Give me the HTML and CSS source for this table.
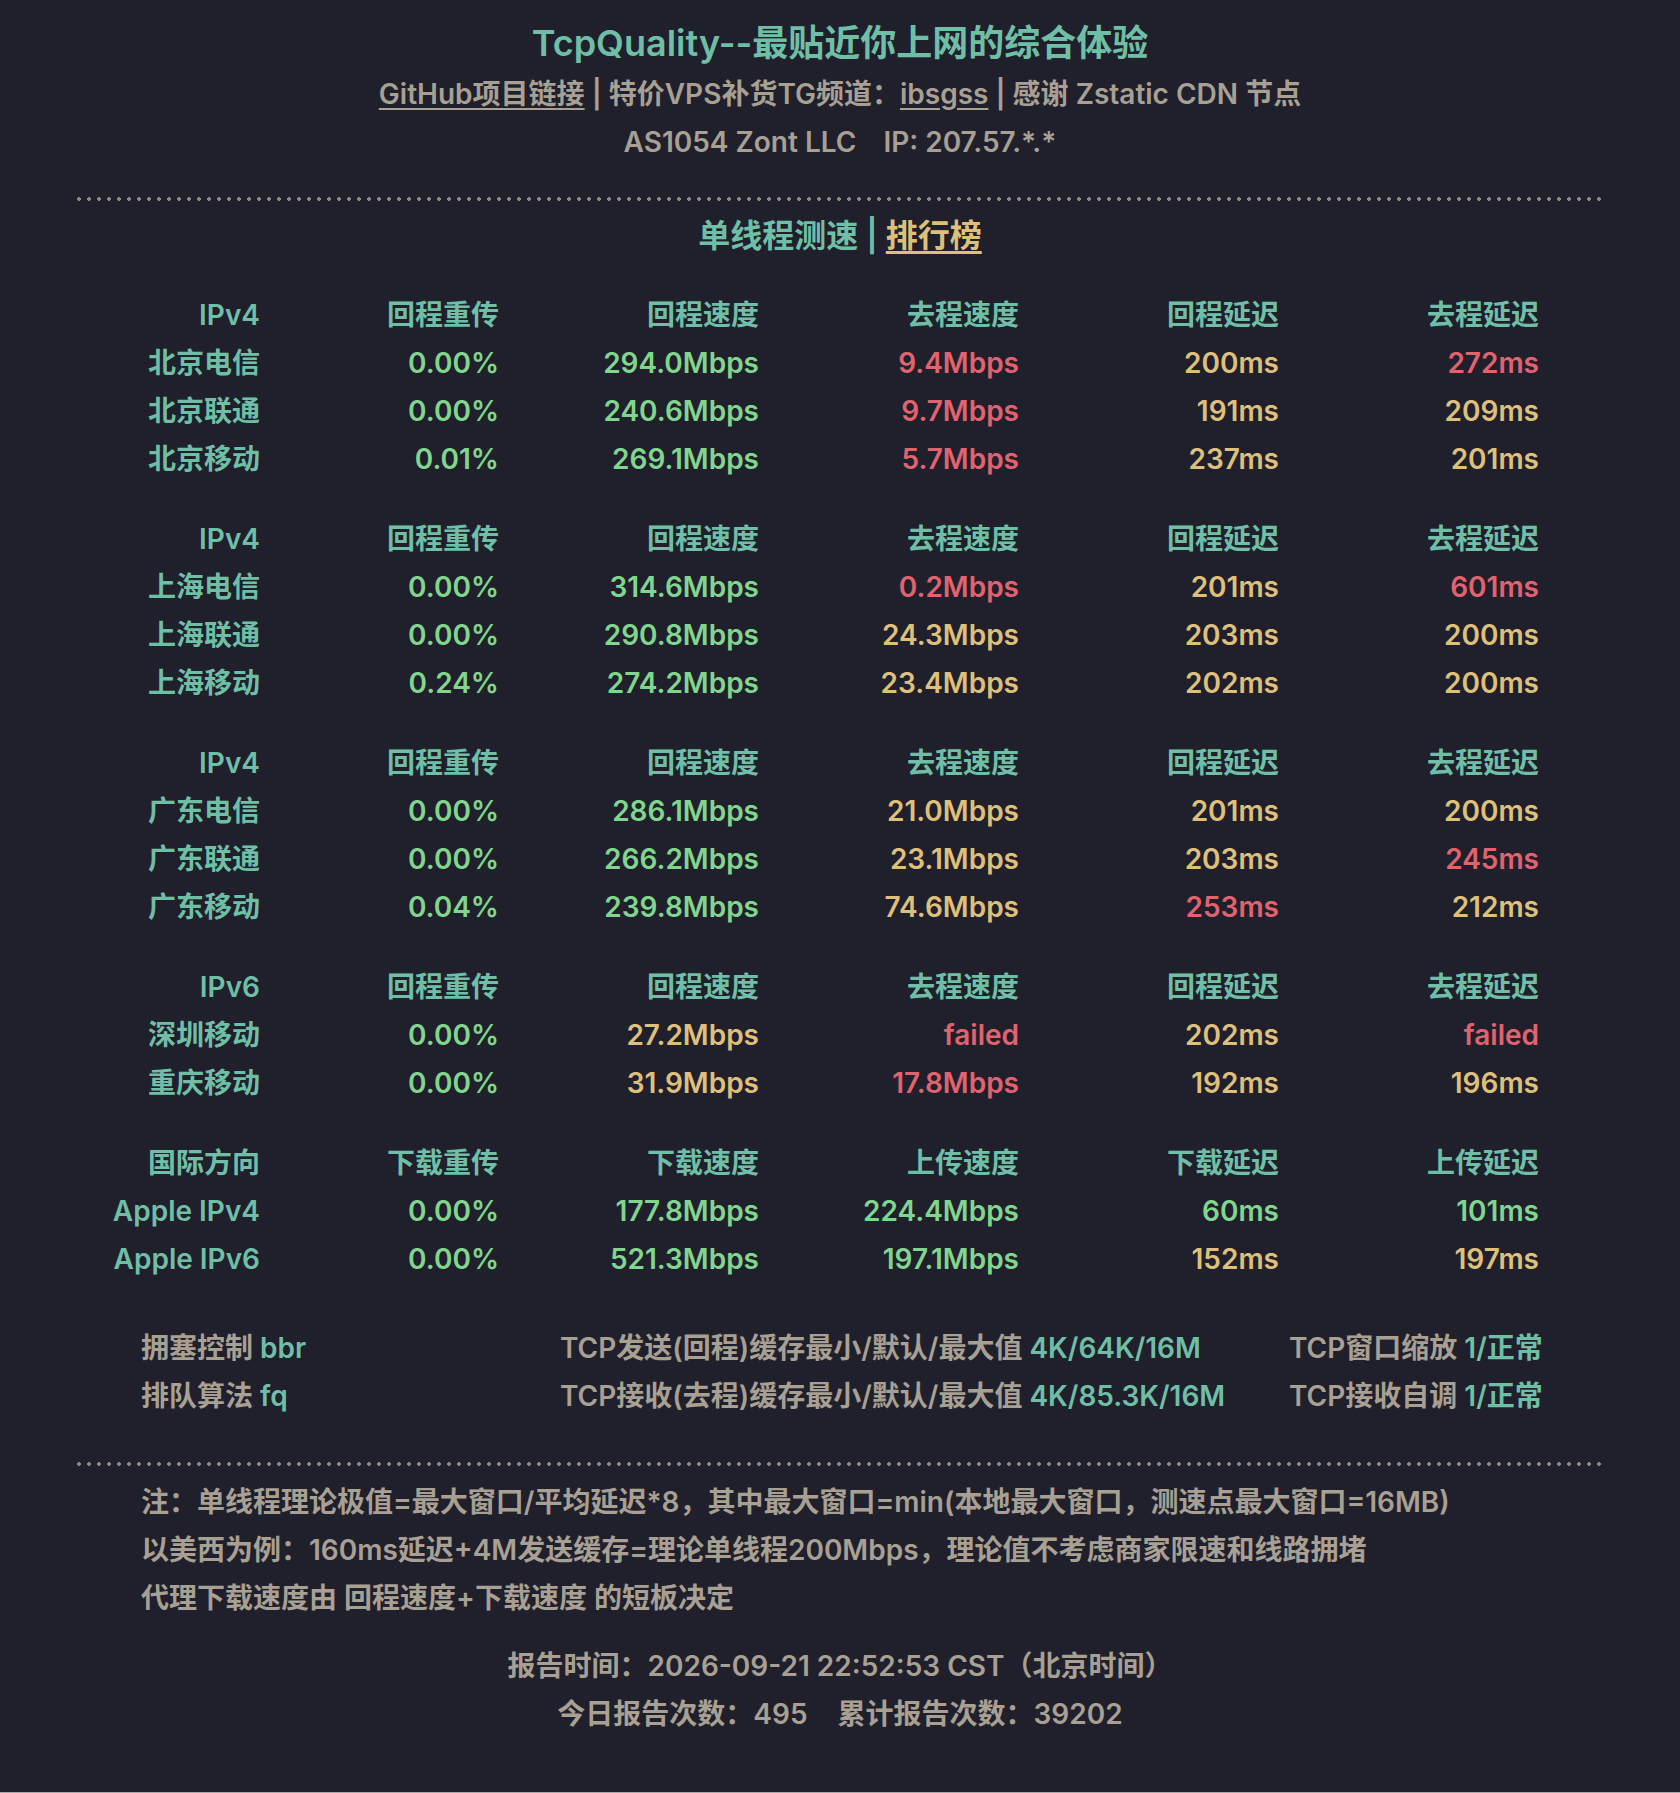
FILE: index.html
```html
<!DOCTYPE html>
<html lang="zh-CN">
<head>
<meta charset="utf-8">
<title>TcpQuality</title>
<link rel="stylesheet" href="styles.css">
</head>
<body>
<div class="page">
  <header class="head">
    <h1 class="title">TcpQuality--最贴近你上网的综合体验</h1>
    <p class="line"><a class="link" href="#">GitHub项目链接</a> | 特价VPS补货TG频道：<a class="link" href="#">ibsgss</a> | 感谢 Zstatic CDN 节点</p>
    <p class="line">AS1054 Zont LLC<span class="sp"></span>IP: 207.57.*.*</p>
  </header>

  <div class="dots"></div>

  <h2 class="sub">单线程测速 <span class="bar">|</span> <a class="rank" href="#">排行榜</a></h2>

  <div class="group">
    <div class="th">IPv4</div><div class="th">回程重传</div><div class="th">回程速度</div><div class="th">去程速度</div><div class="th">回程延迟</div><div class="th">去程延迟</div>
    <div class="th">北京电信</div><div class="g">0.00%</div><div class="g">294.0Mbps</div><div class="r">9.4Mbps</div><div class="y">200ms</div><div class="r">272ms</div>
    <div class="th">北京联通</div><div class="g">0.00%</div><div class="g">240.6Mbps</div><div class="r">9.7Mbps</div><div class="y">191ms</div><div class="y">209ms</div>
    <div class="th">北京移动</div><div class="g">0.01%</div><div class="g">269.1Mbps</div><div class="r">5.7Mbps</div><div class="y">237ms</div><div class="y">201ms</div>
  </div>

  <div class="group">
    <div class="th">IPv4</div><div class="th">回程重传</div><div class="th">回程速度</div><div class="th">去程速度</div><div class="th">回程延迟</div><div class="th">去程延迟</div>
    <div class="th">上海电信</div><div class="g">0.00%</div><div class="g">314.6Mbps</div><div class="r">0.2Mbps</div><div class="y">201ms</div><div class="r">601ms</div>
    <div class="th">上海联通</div><div class="g">0.00%</div><div class="g">290.8Mbps</div><div class="y">24.3Mbps</div><div class="y">203ms</div><div class="y">200ms</div>
    <div class="th">上海移动</div><div class="g">0.24%</div><div class="g">274.2Mbps</div><div class="y">23.4Mbps</div><div class="y">202ms</div><div class="y">200ms</div>
  </div>

  <div class="group">
    <div class="th">IPv4</div><div class="th">回程重传</div><div class="th">回程速度</div><div class="th">去程速度</div><div class="th">回程延迟</div><div class="th">去程延迟</div>
    <div class="th">广东电信</div><div class="g">0.00%</div><div class="g">286.1Mbps</div><div class="y">21.0Mbps</div><div class="y">201ms</div><div class="y">200ms</div>
    <div class="th">广东联通</div><div class="g">0.00%</div><div class="g">266.2Mbps</div><div class="y">23.1Mbps</div><div class="y">203ms</div><div class="r">245ms</div>
    <div class="th">广东移动</div><div class="g">0.04%</div><div class="g">239.8Mbps</div><div class="y">74.6Mbps</div><div class="r">253ms</div><div class="y">212ms</div>
  </div>

  <div class="group">
    <div class="th">IPv6</div><div class="th">回程重传</div><div class="th">回程速度</div><div class="th">去程速度</div><div class="th">回程延迟</div><div class="th">去程延迟</div>
    <div class="th">深圳移动</div><div class="g">0.00%</div><div class="y">27.2Mbps</div><div class="r">failed</div><div class="y">202ms</div><div class="r">failed</div>
    <div class="th">重庆移动</div><div class="g">0.00%</div><div class="y">31.9Mbps</div><div class="r">17.8Mbps</div><div class="y">192ms</div><div class="y">196ms</div>
  </div>

  <div class="group">
    <div class="th">国际方向</div><div class="th">下载重传</div><div class="th">下载速度</div><div class="th">上传速度</div><div class="th">下载延迟</div><div class="th">上传延迟</div>
    <div class="th">Apple IPv4</div><div class="g">0.00%</div><div class="g">177.8Mbps</div><div class="g">224.4Mbps</div><div class="g">60ms</div><div class="g">101ms</div>
    <div class="th">Apple IPv6</div><div class="g">0.00%</div><div class="g">521.3Mbps</div><div class="g">197.1Mbps</div><div class="y">152ms</div><div class="y">197ms</div>
  </div>

  <div class="sys">
    <div>拥塞控制 <span class="v">bbr</span></div>
    <div>TCP发送(回程)缓存最小/默认/最大值 <span class="v">4K/64K/16M</span></div>
    <div>TCP窗口缩放 <span class="v">1/正常</span></div>
    <div>排队算法 <span class="v">fq</span></div>
    <div>TCP接收(去程)缓存最小/默认/最大值 <span class="v">4K/85.3K/16M</span></div>
    <div>TCP接收自调 <span class="v">1/正常</span></div>
  </div>

  <div class="dots dots-b"></div>

  <div class="notes">
    <p>注：单线程理论极值=最大窗口/平均延迟*8，其中最大窗口=min(本地最大窗口，测速点最大窗口=16MB)</p>
    <p>以美西为例：160ms延迟+4M发送缓存=理论单线程200Mbps，理论值不考虑商家限速和线路拥堵</p>
    <p>代理下载速度由 回程速度+下载速度 的短板决定</p>
  </div>

  <div class="report">
    <p>报告时间：2026-09-21 22:52:53 CST（北京时间）</p>
    <p>今日报告次数：495<span class="sp2"></span>累计报告次数：39202</p>
  </div>
</div>
</body>
</html>
```

FILE: styles.css
```css
html {
  background: #a9a9a9;
}
body {
  margin: 0;
  font-family: Inter, "Noto Sans CJK SC", sans-serif;
  font-weight: 600;
  font-size: 28px;
  line-height: 48px;
  color: #a7a093;
}
.page {
  background: #201f2c;
  height: 1792px;
  padding-top: 16px;
  box-sizing: border-box;
  overflow: hidden;
}
p { margin: 0; }
.head { text-align: center; }
.title {
  margin: 0;
  font-size: 36px;
  line-height: 54px;
  font-weight: 600;
  color: #6fbfa6;
}
.line { color: #a7a093; }
.link { color: #a7a093; text-decoration: underline; text-underline-offset: 4px; }
.sp { display: inline-block; width: 27px; }
.sp2 { display: inline-block; width: 30px; }
.dots {
  margin: 31px 77px 0;
  height: 4px;
  background-image: radial-gradient(circle at 2px 2px, #8e897f 1.6px, transparent 2.1px);
  background-size: 10px 4px;
  background-repeat: repeat-x;
}
.sub {
  margin: 11px 0 0;
  text-align: center;
  font-size: 32px;
  line-height: 48px;
  font-weight: 600;
  color: #6fbfa6;
}
.bar { color: #6fbfa6; }
.rank { color: #dfc07a; text-decoration: underline; text-underline-offset: 4px; }
.group {
  display: grid;
  grid-template-columns: 183px 239px 260px 260px 260px 260px;
  margin: 31px 0 0 77px;
  text-align: right;
  white-space: nowrap;
}
.group + .group { margin-top: 32px; }
.th { color: #6fbfa6; }
.g { color: #80d68c; }
.r { color: #e1636e; }
.y { color: #dfc07a; }
.sys {
  display: grid;
  grid-template-columns: 419px 729px auto;
  margin: 41px 0 0 141px;
  white-space: nowrap;
}
.v { color: #6fbfa6; }
.dots-b { margin-top: 42px; }
.notes {
  margin: 12px 0 0 141px;
}
.report {
  margin-top: 20px;
  text-align: center;
}
```
